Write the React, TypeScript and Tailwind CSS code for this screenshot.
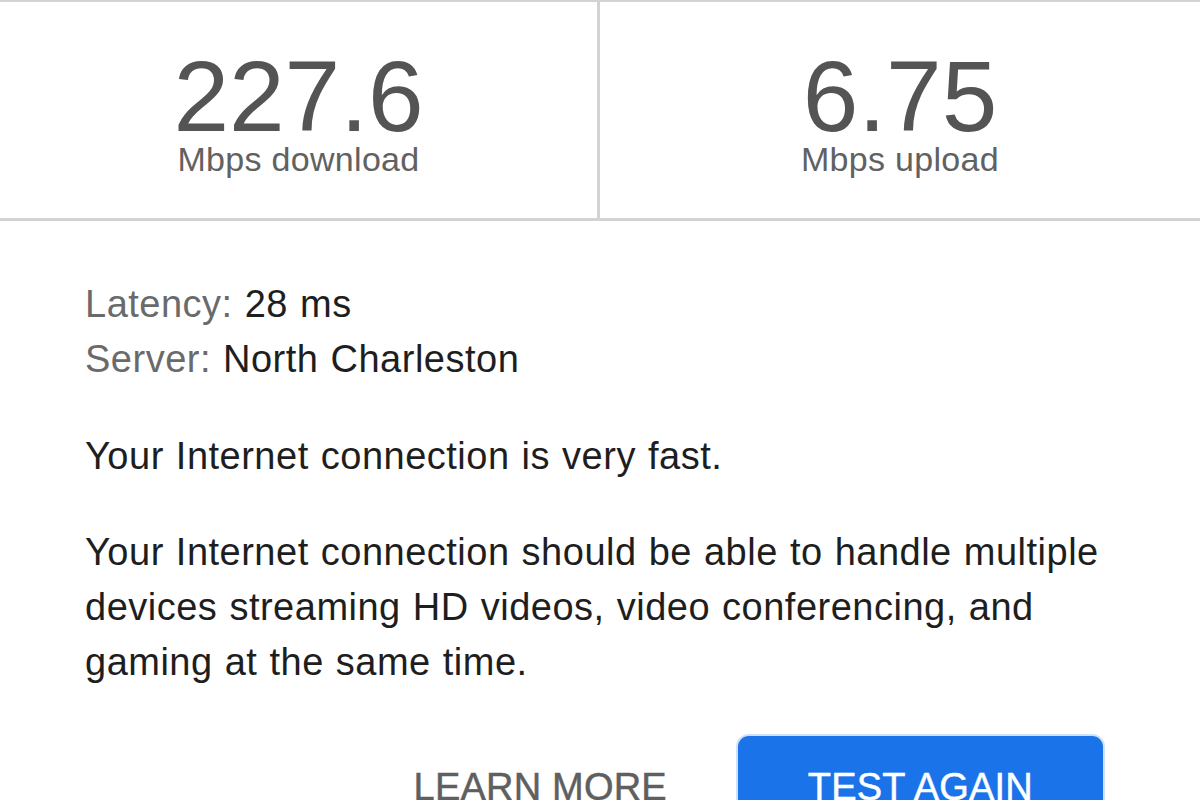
export default function App() {
  const font = { fontFamily: '"Liberation Sans", Arial, Helvetica, sans-serif' };
  return (
    <div className="w-[1200px] bg-white" style={font}>
      <div className="grid grid-cols-2 border-t-2 border-b-[3px] border-[#d3d3d3]">
        <div className="flex flex-col items-center pt-[49px] pb-[42px] border-r-[3px] border-[#d3d3d3]">
          <div className="text-[100px] leading-[90px] text-[#545454]">227.6</div>
          <div className="mt-[1px] text-[34px] leading-[34px] tracking-[0.3px] text-[#616161]">Mbps download</div>
        </div>
        <div className="flex flex-col items-center pt-[49px] pb-[42px]">
          <div className="text-[100px] leading-[90px] text-[#545454]">6.75</div>
          <div className="mt-[1px] text-[34px] leading-[34px] tracking-[0.3px] text-[#616161]">Mbps upload</div>
        </div>
      </div>
      <div className="pl-[85px] pr-[95px] pt-[56px] text-[38px] leading-[55px] tracking-[0.5px] [word-spacing:1px] text-[#1e1e1e]">
        <div>
          <span className="text-[#6a6a6a]">Latency:</span> 28 ms
        </div>
        <div>
          <span className="text-[#6a6a6a]">Server:</span> North Charleston
        </div>
        <p className="mt-[42px]">Your Internet connection is very fast.</p>
        <p className="mt-[41px]">
          Your Internet connection should be able to handle multiple devices streaming HD videos, video conferencing, and gaming at the same time.
        </p>
        <div className="mt-[46px] flex justify-end items-start">
          <button className="mr-[71px] pt-[28px] text-[38px] leading-[46px] text-[#5f5f5f] tracking-[0.2px] [word-spacing:0px] [-webkit-text-stroke:0.5px_currentColor]">
            LEARN MORE
          </button>
          <button className="rounded-[11px] bg-[#1a73e8] ring-2 ring-[#cfe0fb] px-[70px] pt-[28px] pb-[27px] text-[38px] leading-[46px] text-white tracking-[0.2px] [word-spacing:0px] [-webkit-text-stroke:0.5px_currentColor] mr-[2px]">
            TEST AGAIN
          </button>
        </div>
      </div>
    </div>
  );
}
